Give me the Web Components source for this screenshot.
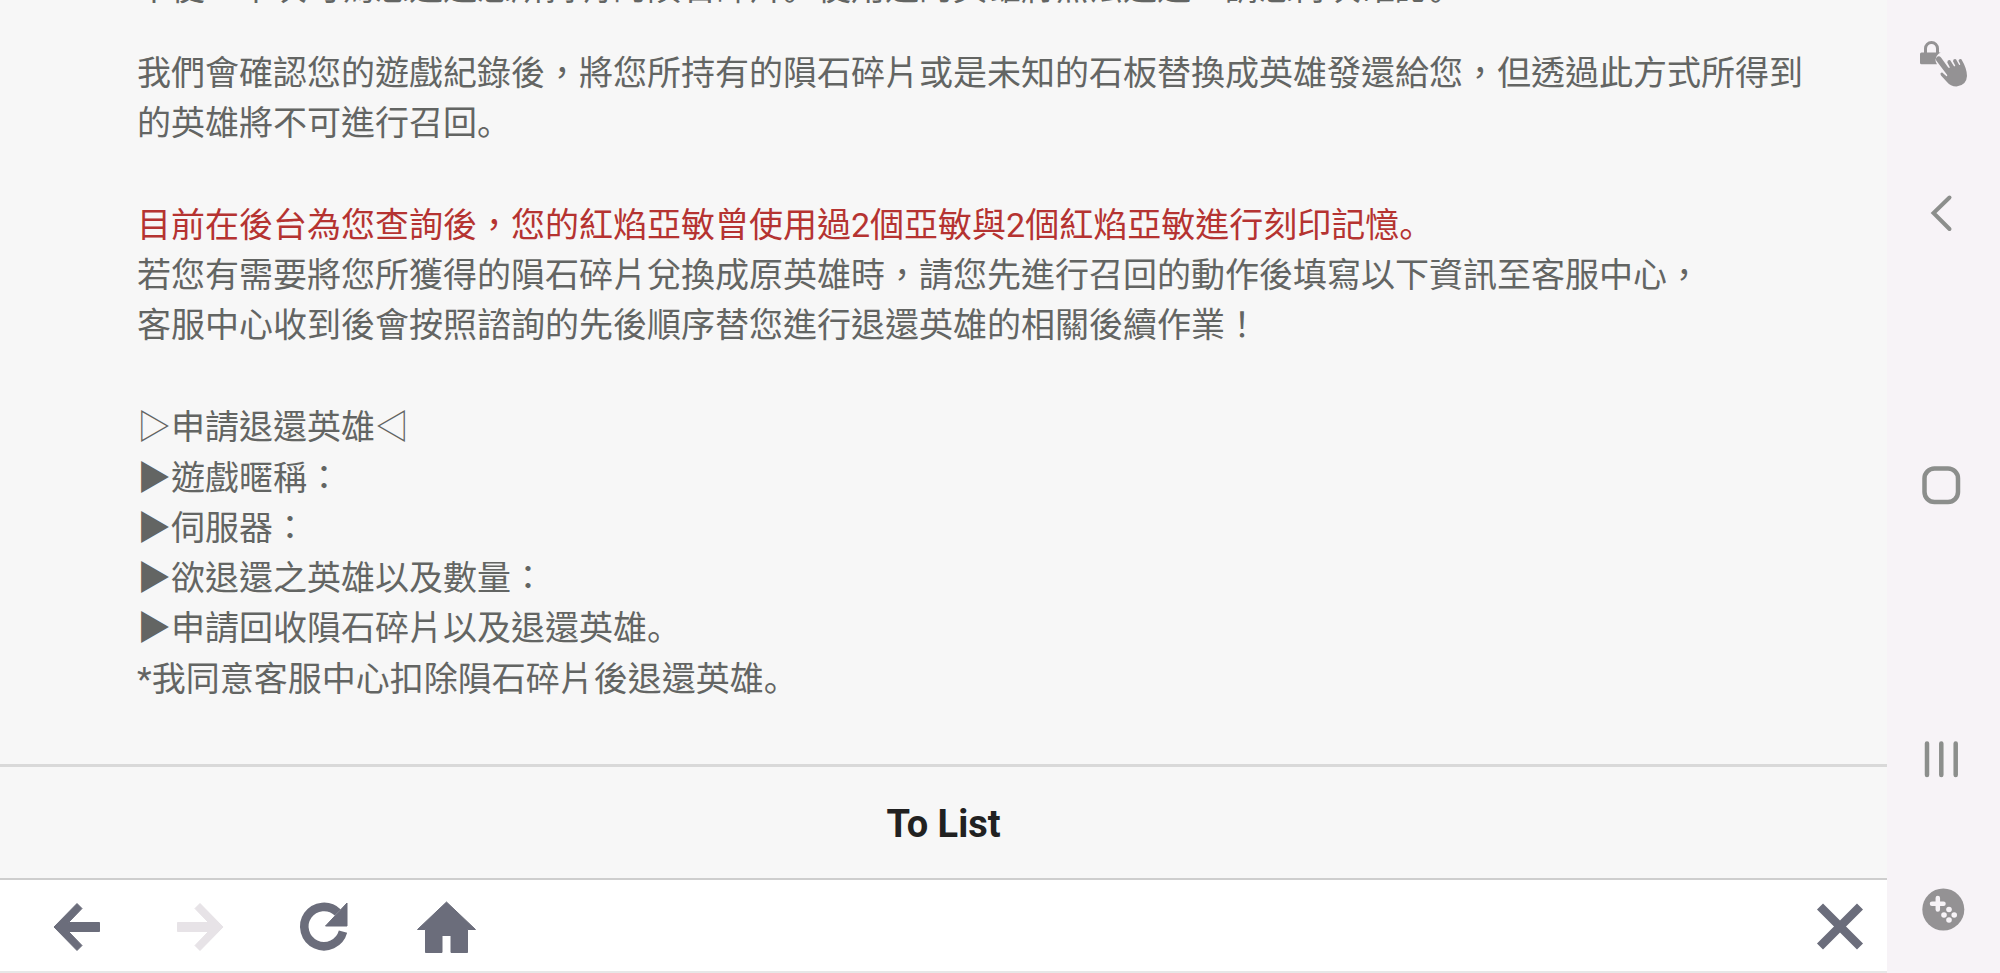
<!DOCTYPE html>
<html lang="zh-Hant">
<head>
<meta charset="UTF-8">
<meta name="viewport" content="width=device-width, initial-scale=1.0">
<title>客服中心</title>
<style>
    html, body {
        margin: 0;
        height: 100%;
    }
    body {
        font-family: Roboto, "Noto Sans CJK TC", sans-serif;
        background: #f7f7f7;
        overflow: hidden;
    }
    [lang="zh-Hans"] {
        font-family: Roboto, "Noto Sans CJK SC", sans-serif;
    }
</style>
</head>
<body>
<app-shell>
    <support-answer>
        <answer-block space="35">不便，本次可為您退還您所持有的隕石碎片<span lang="zh-Hans">。</span>使用過的英雄將無法退還，請您再次確認<span lang="zh-Hans">。</span></answer-block>
        <answer-block space="52">我們會確認您的遊戲紀錄後，將您所持有的隕石碎片或是未知的石板替換成英雄發還給您，但透過此方式所得到的英雄將不可進行召回<span lang="zh-Hans">。</span></answer-block>
        <answer-block tone="alert">目前在後台為您查詢後，您的紅焰亞敏曾使用過2個亞敏與2個紅焰亞敏進行刻印記憶<span lang="zh-Hans">。</span></answer-block>
        <answer-block space="52">若您有需要將您所獲得的隕石碎片兌換成原英雄時，請您先進行召回的動作後填寫以下資訊至客服中心，<br>客服中心收到後會按照諮詢的先後順序替您進行退還英雄的相關後續作業！</answer-block>
        <answer-block space="1">▷申請退還英雄◁</answer-block>
        <answer-block space="1">▶遊戲暱稱：<br>▶伺服器：<br>▶欲退還之英雄以及數量：<br>▶申請回收隕石碎片以及退還英雄<span lang="zh-Hans">。</span></answer-block>
        <answer-block>*我同意客服中心扣除隕石碎片後退還英雄<span lang="zh-Hans">。</span></answer-block>
    </support-answer>
    <list-button>To List</list-button>
    <browser-bar></browser-bar>
    <system-rail slot="rail"></system-rail>
</app-shell>

<script>
/**** ICONOS */
const icons = {
    arrow: '<path d="M30 6.500 35 11.500 21.500 25.500H52.500v9H21.500L35 48.500 30 53.500 7 30Z" fill="currentColor" stroke="currentColor" stroke-width="1" stroke-linejoin="round"/>',
    reload: '<path d="M50 34.700A19.700 19.700 0 1 1 44.800 15.500" fill="none" stroke="currentColor" stroke-width="8.600"/><path d="M54 6v23H32.500Z" fill="currentColor" stroke="currentColor" stroke-width="1" stroke-linejoin="round"/>',
    home: '<path d="M30.500 5 59.500 32.500H51.500V55.500H35V38.500H26V55.500H9.500V32.500H1.500Z" fill="currentColor" stroke="currentColor" stroke-width="1" stroke-linejoin="round"/>',
    close: '<path d="M10 9.500 50 49.500M50 9.500 10 49.500" fill="none" stroke="currentColor" stroke-width="8.500"/>',
    touchLock: '<path d="M12.500 20v-4.500a6 6 0 0 1 12 0V20" fill="none" stroke="currentColor" stroke-width="3"/><path d="M8.500 19.500H27.700Q23 21.500 22.500 27q0 2.500 1.500 4.200H8.500Q7 31.200 7 29.700V21Q7 19.500 8.500 19.500Z" fill="currentColor"/><path d="M23.700 24.200Q26 22.300 28.200 24.700L35.200 34.500Q36.500 35.400 36.800 34.300L34.300 29.500Q34.300 26.700 37.200 27.200L41 33.200Q42.300 33.700 42.200 32.400L40 28.200Q40.200 25.500 43 26.200L46.200 32Q47.300 32.300 47.200 31L45.500 27.700Q46 25.300 48.400 26.200Q54 35.500 54 43Q53.500 52.500 43.500 53.500Q37.500 53.500 33.500 48.500L28 42.500Q26.500 39.500 29.200 39.500L33.500 43.200Q34.800 43.300 34 41.700L23.200 27.500Q22.400 25.500 23.700 24.200Z" fill="currentColor"/>',
    chevron: '<path d="M36.500 14.500 20.500 30 36.500 46" fill="none" stroke="currentColor" stroke-width="4" stroke-linecap="round"/>',
    square: '<rect x="11.500" y="12.500" width="33.500" height="33.500" rx="10" fill="none" stroke="currentColor" stroke-width="4.500"/>',
    recents: '<path d="M14 14.500V46M28.300 14.500V46M42.700 14.500V46" fill="none" stroke="currentColor" stroke-width="4.500" stroke-linecap="round"/>',
    gamepad: '<circle cx="30.300" cy="30.500" r="21" fill="currentColor"/><path d="M24.800 19V30.500M19 24.700H30.500" fill="none" stroke="#f7f3f7" stroke-width="4.500" stroke-linecap="round"/><g fill="#f7f3f7"><circle cx="36" cy="30.500" r="2.800"/><circle cx="31" cy="36" r="2.800"/><circle cx="41.200" cy="36" r="2.800"/><circle cx="36" cy="41" r="2.800"/></g>'
}

/**** BOTON REUTILIZABLE */
class IconButton extends HTMLElement {
    constructor() {
        super();
        const shadow = this.attachShadow({mode: 'open'})
        const disabled = this.hasAttribute('disabled') ? 'disabled' : ''
        shadow.innerHTML = `
        <style>
            :host {
                display: block;
                width: 60px;
                height: 60px;
            }
            button {
                display: block;
                width: 100%;
                height: 100%;
                padding: 0;
                border: 0;
                background: none;
                color: inherit;
            }
            svg {
                display: block;
            }
            :host([flip]) svg {
                transform: scaleX(-1);
            }
        </style>
        <button type="button" aria-label="${this.getAttribute('label')}" ${disabled}>
            <svg width="60" height="60" viewBox="0 0 60 60" aria-hidden="true">${icons[this.getAttribute('icon')]}</svg>
        </button>
        `
    }
}
customElements.define('icon-button', IconButton)

/**** ESTRUCTURA DE LA PAGINA */
class AppShell extends HTMLElement {
    constructor() {
        super();
        const shadow = this.attachShadow({mode: 'open'})
        shadow.innerHTML = `
        <style>
            :host {
                display: flex;
                height: 100vh;
            }
            main {
                flex: 1;
                min-width: 0;
                display: flex;
                flex-direction: column;
            }
        </style>
        <main><slot></slot></main>
        <slot name="rail"></slot>
        `
    }
}
customElements.define('app-shell', AppShell)

/**** RESPUESTA DE SOPORTE, siempre pegada al final */
class SupportAnswer extends HTMLElement {
    constructor() {
        super();
        const shadow = this.attachShadow({mode: 'open'})
        shadow.innerHTML = `
        <style>
            :host {
                flex: 1;
                min-height: 0;
                overflow: hidden;
                display: flex;
                flex-direction: column;
                justify-content: flex-end;
                padding: 0 64px 60px 137px;
                color: #636563;
                font-size: 34px;
                line-height: 50px;
            }
        </style>
        <slot></slot>
        `
    }
}
customElements.define('support-answer', SupportAnswer)

class AnswerBlock extends HTMLElement {
    constructor() {
        super();
        const shadow = this.attachShadow({mode: 'open'})
        shadow.innerHTML = `
        <style>
            :host {
                display: block;
                flex: none;
                margin-bottom: ${this.getAttribute('space') || 0}px;
            }
            :host([tone="alert"]) {
                color: #b53331;
            }
            p {
                margin: 0;
            }
        </style>
        <p><slot></slot></p>
        `
    }
}
customElements.define('answer-block', AnswerBlock)

class ListButton extends HTMLElement {
    constructor() {
        super();
        const shadow = this.attachShadow({mode: 'open'})
        shadow.innerHTML = `
        <style>
            :host {
                display: block;
                border-top: 3px solid #d9d9d9;
            }
            button {
                display: block;
                width: 100%;
                height: 111px;
                padding: 2px 0 0;
                border: 0;
                background: none;
                color: #212121;
                font: 700 38px/44px Roboto, sans-serif;
            }
        </style>
        <button type="button"><slot></slot></button>
        `
    }
}
customElements.define('list-button', ListButton)

/**** BARRA DEL NAVEGADOR */
class BrowserBar extends HTMLElement {
    constructor() {
        super();
        const shadow = this.attachShadow({mode: 'open'})
        shadow.innerHTML = `
        <style>
            :host {
                display: flex;
                align-items: center;
                gap: 63px;
                height: 89px;
                padding: 2px 17px 0 47px;
                border-top: 2px solid #cecece;
                border-bottom: 2px solid #e7e7e7;
                background: #fff;
                color: #6b6d7b;
            }
            [disabled] {
                color: #e7e3e7;
            }
            [icon="close"] {
                margin-left: auto;
            }
        </style>
        <icon-button icon="arrow" label="Back"></icon-button>
        <icon-button icon="arrow" label="Forward" flip disabled></icon-button>
        <icon-button icon="reload" label="Reload"></icon-button>
        <icon-button icon="home" label="Home"></icon-button>
        <icon-button icon="close" label="Close"></icon-button>
        `
    }
}
customElements.define('browser-bar', BrowserBar)

/**** BOTONES DEL SISTEMA */
class SystemRail extends HTMLElement {
    constructor() {
        super();
        const shadow = this.attachShadow({mode: 'open'})
        shadow.innerHTML = `
        <style>
            :host {
                box-sizing: border-box;
                display: flex;
                flex-direction: column;
                width: 113px;
                padding: 33px 27px 34px 26px;
                background: #f7f3f7;
                color: #949294;
            }
            nav {
                flex: 1;
                display: flex;
                flex-direction: column;
                justify-content: space-between;
                margin: 90px 0;
                color: #8c8e8c;
            }
        </style>
        <icon-button icon="touchLock" label="Touch lock"></icon-button>
        <nav>
            <icon-button icon="chevron" label="Back"></icon-button>
            <icon-button icon="square" label="Home"></icon-button>
            <icon-button icon="recents" label="Recents"></icon-button>
        </nav>
        <icon-button icon="gamepad" label="Game tools"></icon-button>
        `
    }
}
customElements.define('system-rail', SystemRail)
</script>
</body>
</html>
